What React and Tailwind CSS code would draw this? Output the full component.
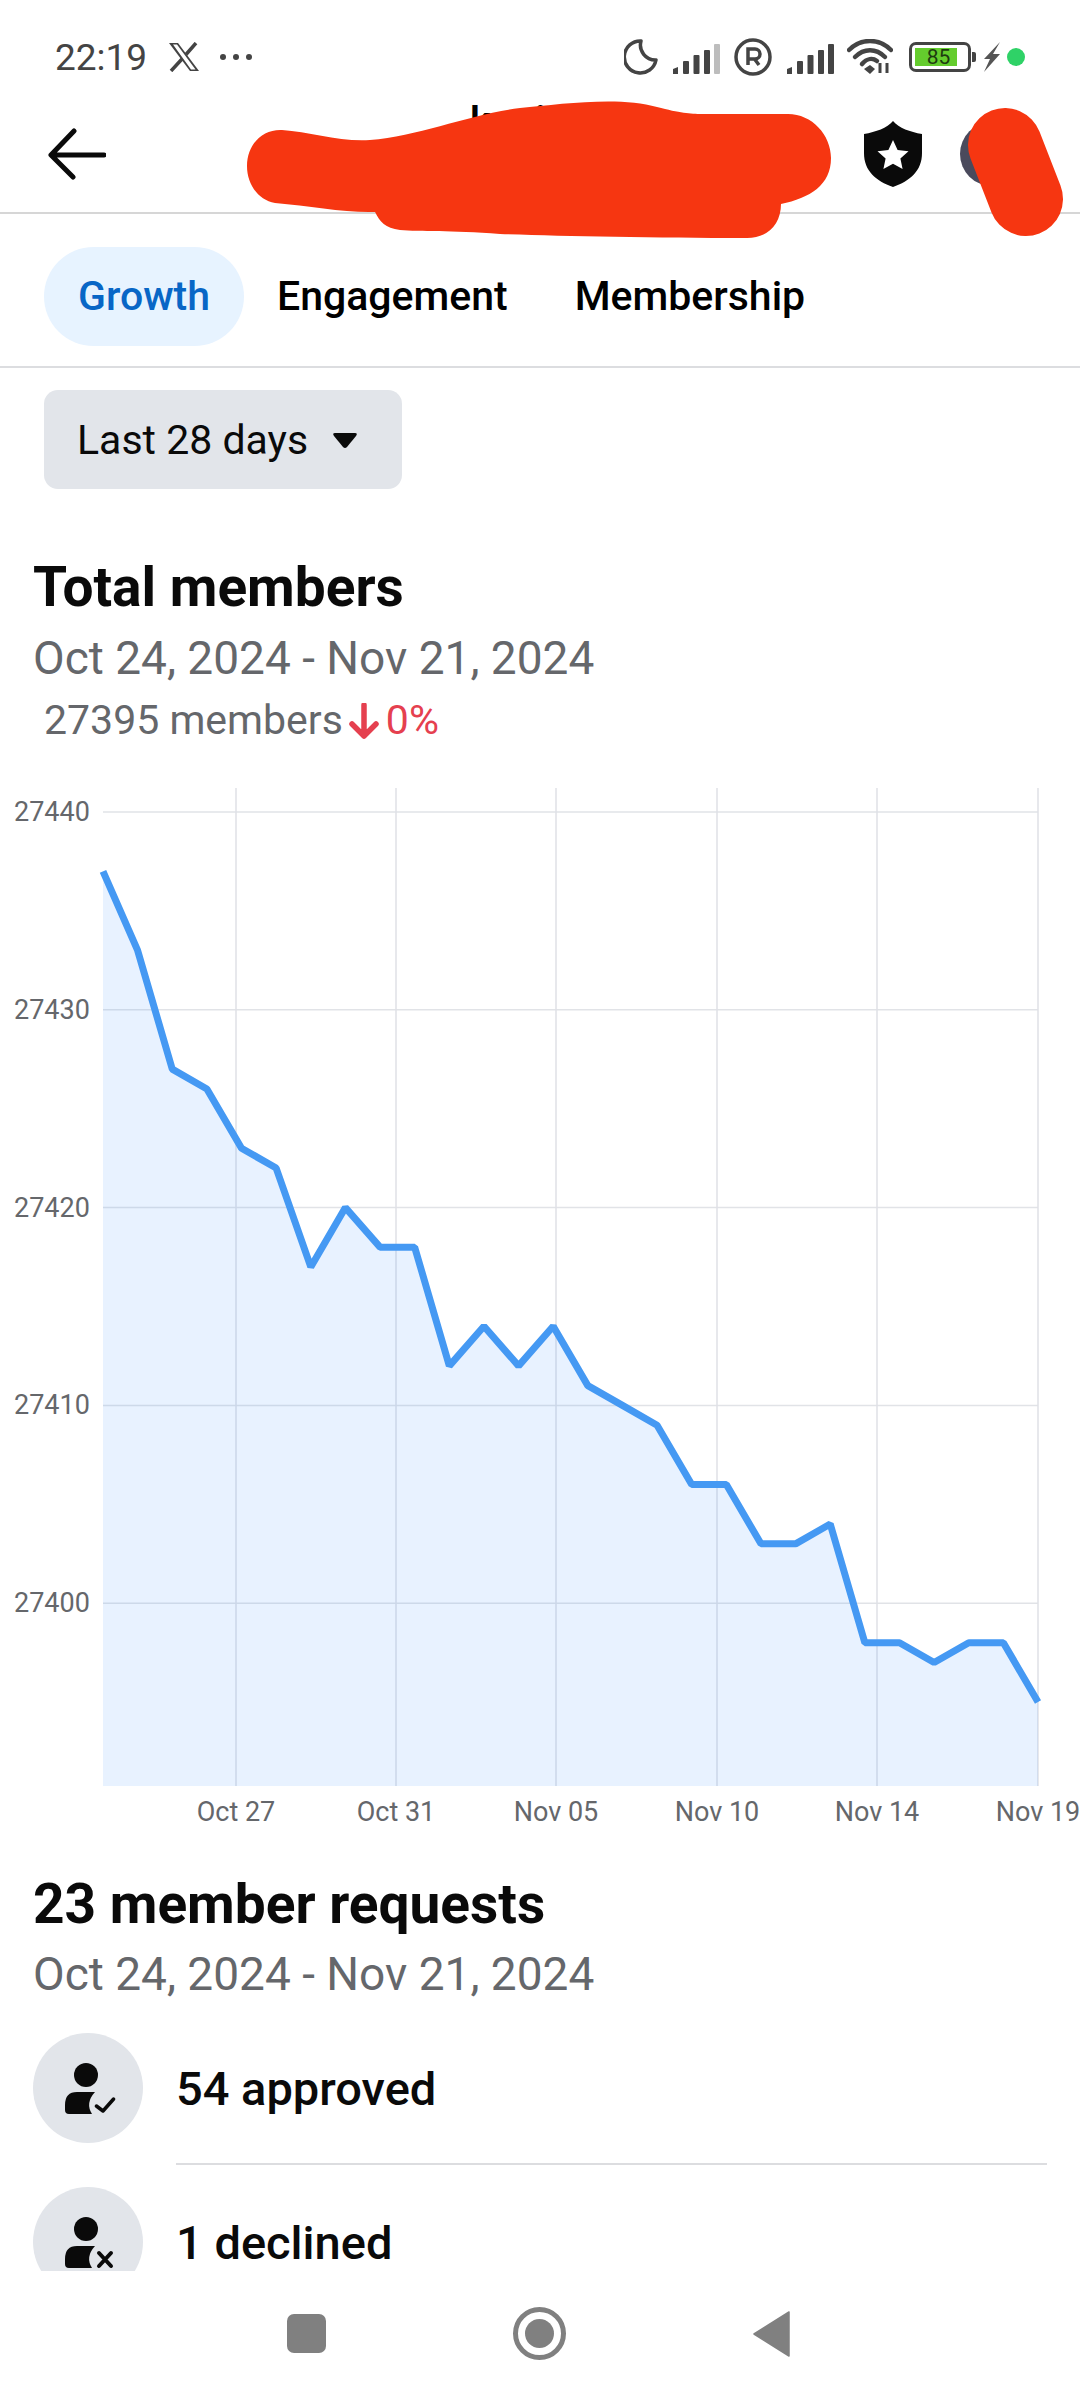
const values = [
  27437, 27433, 27427, 27426, 27423, 27422, 27417, 27420, 27418, 27418, 27412, 27414, 27412, 27414,
  27411, 27410, 27409, 27406, 27406, 27403, 27403, 27404, 27398, 27398, 27397, 27398, 27398, 27395,
];

const pointX = (i) => 103 + i * 34.63;
const pointY = (v) => 32 + (27440 - v) * 19.78;
const linePoints = values.map((v, i) => `${pointX(i)},${pointY(v)}`).join(" ");

const yTicks = [27440, 27430, 27420, 27410, 27400];
const xTicks = [
  { x: 236, label: "Oct 27" },
  { x: 396, label: "Oct 31" },
  { x: 556, label: "Nov 05" },
  { x: 717, label: "Nov 10" },
  { x: 877, label: "Nov 14" },
  { x: 1038, label: "Nov 19" },
];

function SignalBars({ lastLight }) {
  return (
    <svg width="48" height="30" viewBox="0 0 48 30">
      <path d="M1 30V25L6 23V30Z" fill="#444" />
      <rect x="11" y="17" width="6" height="13" rx="1" fill="#444" />
      <rect x="21.500" y="11" width="6" height="19" rx="1" fill="#444" />
      <rect x="32" y="6" width="6" height="24" rx="1" fill="#444" />
      <rect x="42" y="0" width="6" height="30" rx="1" fill={lastLight ? "#bdbdbd" : "#444"} />
    </svg>
  );
}

function StatusBar() {
  return (
    <div className="h-[70px] pt-[44px] pl-[55px] pr-[55px] flex items-center justify-between text-[#444]">
      <div className="flex items-center">
        <span className="text-[37px] leading-none">22:19</span>
        <svg width="32" height="30" viewBox="0 0 32 30" className="ml-[21px]">
          <path d="M1 1H10L31 29H22Z M5 2.500L23 27.500H27.500L9 2.500Z" fill="#444" fillRule="evenodd" />
          <path d="M28 1L18 12.500M14 17L3 29" stroke="#444" strokeWidth="3.500" fill="none" />
        </svg>
        <div className="ml-[20px] flex gap-[7px]">
          <div className="w-[6px] h-[6px] rounded-full bg-[#444]"></div>
          <div className="w-[6px] h-[6px] rounded-full bg-[#444]"></div>
          <div className="w-[6px] h-[6px] rounded-full bg-[#444]"></div>
        </div>
      </div>
      <div className="flex items-center">
        <svg width="34" height="36" viewBox="0 0 34 36">
          <path d="M17 2A16 16 0 1 0 32 21A15 15 0 0 1 17 2Z" fill="none" stroke="#444" strokeWidth="3.500" strokeLinejoin="round" />
        </svg>
        <div className="ml-[14px] mt-[4px] flex"><SignalBars lastLight /></div>
        <svg width="38" height="38" viewBox="0 0 38 38" className="ml-[14px]">
          <circle cx="19" cy="19" r="17" fill="none" stroke="#444" strokeWidth="3.500" />
          <path d="M14 27V11H21A5 5 0 0 1 21 21H14M20.500 21L25 27" fill="none" stroke="#444" strokeWidth="3.500" />
        </svg>
        <div className="ml-[14px] mt-[4px] flex"><SignalBars /></div>
        <svg width="46" height="36" viewBox="0 0 46 36" className="ml-[13px]">
          <path d="M2 11C14 -1 32 -1 44 11" fill="none" stroke="#444" strokeWidth="4.500" strokeLinecap="round" />
          <path d="M8 18C17 9 29 9 38 18" fill="none" stroke="#444" strokeWidth="4.500" strokeLinecap="round" />
          <path d="M15 25C20 19 26 19 30 22" fill="none" stroke="#444" strokeWidth="4.500" strokeLinecap="round" />
          <path d="M17 30L23 26L28 30L23 35Z" fill="#444" />
          <path d="M33 24V34M40 24V34" stroke="#444" strokeWidth="3" />
        </svg>
        <div className="ml-[16px] w-[62px] h-[30px] rounded-[7px] border-[3px] border-[#444] p-[3px] flex items-center">
          <div className="w-[42px] h-[18px] bg-[#64cc2d] flex items-center justify-center text-[21px] leading-none text-[#1d3b10] font-normal pl-[5px]">
            85
          </div>
        </div>
        <div className="ml-[1px] w-[4px] h-[10px] rounded-r-[2px] bg-[#444]"></div>
        <svg width="18" height="30" viewBox="0 0 18 30" className="ml-[7px]">
          <path d="M17 0L1 17H7L1 30L17 12H10Z" fill="#555" />
        </svg>
        <div className="ml-[6px] w-[18px] h-[18px] rounded-full bg-[#2fd267]"></div>
      </div>
    </div>
  );
}

function Header() {
  return (
    <div className="relative h-[144px] border-b-2 border-[#d6d6d6]">
      <div className="h-full flex items-center pl-[48px] pr-[20px] pt-[25px]">
        <svg width="58" height="52" viewBox="0 0 58 52">
          <path d="M56 27H4M26 3L3 27L25 49" fill="none" stroke="#0a0a0a" strokeWidth="5" strokeLinecap="round" strokeLinejoin="round" />
        </svg>
        <div className="ml-[364px] self-start mt-[7px] flex gap-[44px] text-[40px] font-semibold leading-none text-black">
          <span>k</span>
          <span>i</span>
        </div>
        <svg width="58" height="66" viewBox="0 0 58 66" className="ml-[318px]">
          <path d="M29 0C35 7 46 11 58 13V32C58 50 46 60 29 66C12 60 0 50 0 32V13C12 11 23 7 29 0Z" fill="#0a0a0a" />
          <path d="M29 19L33.600 29L44.500 30.200L36.400 37.500L38.600 48L29 42.700L19.400 48L21.600 37.500L13.500 30.200L24.400 29Z" fill="#fff" />
        </svg>
        <div className="ml-[38px] w-[64px] h-[64px] rounded-full bg-[#4a4a5c]"></div>
      </div>
      <svg width="1080" height="240" viewBox="0 0 1080 240" className="absolute left-0 top-[-70px]">
        <path
          d="M282 130C310 132 340 142 370 140C420 136 470 114 520 108C560 104 620 96 657 107C680 113 690 114 702 114H788C812 114 831 135 831 158C831 185 810 198 781 204C781 224 768 238 747 238C650 238 560 236 500 234C450 230 420 232 400 230C385 228 380 222 375 212C345 213 310 206 275 203C258 200 247 184 247 166C247 145 262 129 282 130Z"
          fill="#f63611"
        />
        <path d="M1005 145L1026 199" stroke="#f63611" strokeWidth="74" strokeLinecap="round" fill="none" />
      </svg>
    </div>
  );
}

function Tabs() {
  return (
    <div className="h-[154px] border-b-2 border-[#dcdde0] pl-[44px] pt-[33px] flex items-start text-[41px] font-medium">
      <div className="h-[99px] px-[34px] rounded-full bg-[#e7f3ff] text-[#0866c6] flex items-center">Growth</div>
      <div className="h-[99px] ml-[33px] text-black flex items-center">Engagement</div>
      <div className="h-[99px] ml-[67px] text-black flex items-center">Membership</div>
    </div>
  );
}

function Chart() {
  return (
    <svg width="1080" height="1060" viewBox="0 0 1080 1060" className="block">
      {yTicks.map((t) => (
        <g key={t}>
          <line x1="103" x2="1038" y1={pointY(t)} y2={pointY(t)} stroke="#e1e3e7" strokeWidth="1.500" />
          <text x="14" y={pointY(t) + 9} fontSize="27" fill="#65676b">{t}</text>
        </g>
      ))}
      {xTicks.map((t) => (
        <g key={t.label}>
          <line x1={t.x} x2={t.x} y1="8" y2="1006" stroke="#dfe1e6" strokeWidth="1.500" />
          <text x={t.x} y="1041" fontSize="27" fill="#65676b" textAnchor="middle">{t.label}</text>
        </g>
      ))}
      <polygon points={`103,1006 ${linePoints} 1038,1006`} fill="#2d88ff" fillOpacity="0.11" />
      <polyline points={linePoints} fill="none" stroke="#4599f3" strokeWidth="7" strokeLinejoin="bevel" />
    </svg>
  );
}

function PersonIcon({ children }) {
  return (
    <svg width="110" height="110" viewBox="0 0 110 110" className="shrink-0">
      <circle cx="55" cy="55" r="55" fill="#e2e5ea" />
      <circle cx="53" cy="42" r="12" fill="#0a0a0a" />
      <path d="M44 59H62Q52 70 59 81H36Q32 81 32 77V72Q32 59 44 59Z" fill="#0a0a0a" />
      {children}
    </svg>
  );
}

function RequestRow({ icon, label, divider }) {
  return (
    <div className="flex items-start pl-[33px] pr-[33px]">
      {icon}
      <div className={`ml-[33px] flex-1 h-[132px] pt-[8px] ${divider ? "border-b-2 border-[#dcdde0]" : ""}`}>
        <div className="h-[94px] flex items-center text-[47px] font-medium text-[#0a0a0a] leading-none">{label}</div>
      </div>
    </div>
  );
}

export default function App() {
  return (
    <div className="w-[1080px] h-[2400px] bg-white overflow-hidden flex flex-col font-['Roboto',sans-serif]">
      <StatusBar />
      <Header />
      <Tabs />
      <div className="h-[2032px] flex flex-col">
        <div className="h-[1903px] overflow-hidden shrink-0">
          <div className="pl-[44px] pt-[22px]">
            <div className="w-[358px] h-[99px] rounded-[14px] bg-[#e2e5ea] pl-[33px] pt-[3px] flex items-center text-[41px] text-[#0a0a0a]">
              Last 28 days
              <svg width="26" height="18" viewBox="0 0 26 18" className="ml-[24px]">
                <path d="M3 1H23Q26 1 24 4L15 15Q13 17 11 15L2 4Q0 1 3 1Z" fill="#0a0a0a" />
              </svg>
            </div>
          </div>
          <div className="pl-[33px] mt-[64px]">
            <div className="text-[55px] font-bold leading-[68px] text-[#0a0a0a]">Total members</div>
            <div className="mt-[3px] text-[46px] leading-[68px] text-[#65676b]">Oct 24, 2024 - Nov 21, 2024</div>
          </div>
          <div className="pl-[44px] flex items-center h-[58px] text-[41px] text-[#65676b]">
            27395 members
            <svg width="30" height="36" viewBox="0 0 30 36" className="ml-[6px]">
              <path d="M15 2V33M3 21L15 33L27 21" fill="none" stroke="#e5404f" strokeWidth="5.500" strokeLinecap="round" strokeLinejoin="round" />
            </svg>
            <span className="ml-[7px] text-[#e5404f]">0%</span>
          </div>
          <div className="mt-[30px]">
            <Chart />
          </div>
          <div className="pl-[33px] mt-[30px]">
            <div className="text-[55px] font-bold leading-[68px] text-[#0a0a0a]">23 member requests</div>
            <div className="mt-[2px] text-[46px] leading-[68px] text-[#65676b]">Oct 24, 2024 - Nov 21, 2024</div>
          </div>
          <div className="mt-[25px]">
            <RequestRow
              divider
              label="54 approved"
              icon={
                <PersonIcon>
                  <path d="M63.400 73L70 78L80.600 66" fill="none" stroke="#0a0a0a" strokeWidth="3.500" strokeLinecap="round" strokeLinejoin="round" />
                </PersonIcon>
              }
            />
            <div className="mt-[22px]">
              <RequestRow
                label="1 declined"
                icon={
                  <PersonIcon>
                    <path d="M66 66L78 79M78 66L66 79" fill="none" stroke="#0a0a0a" strokeWidth="4" strokeLinecap="round" />
                  </PersonIcon>
                }
              />
            </div>
          </div>
        </div>
        <div className="flex-1 relative flex items-center justify-center">
          <div className="flex items-center pb-[4px] pr-[3px]">
            <div className="w-[39px] h-[39px] rounded-[7px] bg-[#808080]"></div>
            <div className="ml-[187px] w-[53px] h-[53px] rounded-full border-[5px] border-[#808080] flex items-center justify-center">
              <div className="w-[29px] h-[29px] rounded-full bg-[#808080]"></div>
            </div>
            <svg width="38" height="46" viewBox="0 0 38 46" className="ml-[187px]">
              <path d="M36 1V45L1 23Z" fill="#808080" stroke="#808080" strokeWidth="1.500" strokeLinejoin="round" />
            </svg>
          </div>
        </div>
      </div>
    </div>
  );
}
